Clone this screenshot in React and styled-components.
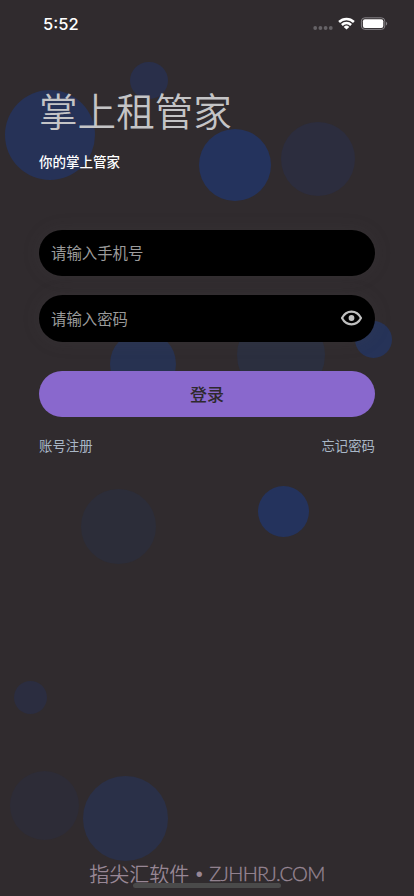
import React from "react";
import styled, { createGlobalStyle } from "styled-components";

const Global = createGlobalStyle`
  * { box-sizing: border-box; }
  body { margin: 0; background: #302b2e; }
  button, input { font: inherit; border: 0; padding: 0; background: none; }
`;

const Screen = styled.main`
  position: relative;
  display: flex;
  flex-direction: column;
  width: 414px;
  height: 896px;
  overflow: hidden;
  isolation: isolate;
  background: #302b2e;
  font-family: "Noto Sans CJK SC", sans-serif;
`;

const Bubble = styled.i`
  position: absolute;
  z-index: -1;
  left: ${(p) => p.$x - p.$r}px;
  top: ${(p) => p.$y - p.$r}px;
  width: ${(p) => p.$r * 2}px;
  height: ${(p) => p.$r * 2}px;
  border-radius: 50%;
  background: ${(p) => p.$color};
`;

const StatusBar = styled.header`
  display: flex;
  justify-content: space-between;
  align-items: center;
  height: 48px;
  padding: 0 26px 0 43px;
`;

const Clock = styled.time`
  color: #fff;
  font: 500 16.5px/20px Inter, sans-serif;
`;

const StatusIcons = styled.svg`
  display: block;
  width: 75px;
  height: 20px;
`;

const Content = styled.section`
  display: flex;
  flex-direction: column;
  padding: 32px 39px 0;
`;

const Title = styled.h1`
  margin: 0;
  color: #c4c4c6;
  font-size: 38.6px;
  line-height: 58px;
  font-weight: 350;
`;

const Subtitle = styled.p`
  margin: 13px 0 0;
  color: #fff;
  font-size: 13.5px;
  line-height: 20px;
  font-weight: 500;
`;

const Form = styled.form`
  display: flex;
  flex-direction: column;
  margin-top: 58.5px;
`;

const Field = styled.label`
  display: flex;
  align-items: center;
  height: 46.5px;
  margin-bottom: 19px;
  padding: 0 12px;
  border-radius: 24px;
  background: #000;
  box-shadow: 0 0 18px rgba(80, 80, 80, 0.16);
`;

const Input = styled.input`
  flex: 1;
  min-width: 0;
  height: 31px;
  padding-bottom: 1px;
  outline: 0;
  color: #ccc;
  font-size: 15.4px;
  &::placeholder { color: #9b9b9b; opacity: 1; }
`;

const EyeIcon = styled.svg`
  display: block;
  width: 23px;
  height: 18px;
`;

const Submit = styled.button`
  height: 46px;
  margin-top: 10px;
  border-radius: 23px;
  background: #8968cd;
  color: #2e292d;
  font-size: 17px;
  line-height: 45px;
  font-weight: 500;
`;

const Links = styled.nav`
  display: flex;
  justify-content: space-between;
  margin-top: 18px;
`;

const Link = styled.a`
  color: #a9b7c6;
  font-size: 13.4px;
  line-height: 20px;
`;

const Footer = styled.footer`
  display: flex;
  flex-direction: column;
  align-items: center;
  margin-top: auto;
  padding-bottom: 7px;
`;

const Credit = styled.div`
  display: flex;
  align-items: center;
  color: #988795;
  font-size: 20px;
  line-height: 30px;
  font-weight: 350;
  white-space: nowrap;
`;

const CreditDot = styled.span`
  width: 20px;
  text-align: center;
  font-family: "Liberation Sans", sans-serif;
  font-weight: 400;
`;

const CreditSite = styled.span`
  width: 115.5px;
  padding-bottom: 1px;
  font-family: Lato, sans-serif;
  font-size: 20px;
  font-weight: 300;
  letter-spacing: -0.65px;
  -webkit-text-stroke: 0.3px #988795;
`;

const HomeIndicator = styled.div`
  position: absolute;
  bottom: 8px;
  left: 133px;
  width: 148px;
  height: 5px;
  border-radius: 3px;
  background: #4a4a4a;
`;

const bubbles = [
  [50, 134.5, 45, "#263257"],
  [149, 80.5, 18.8, "#292f4a"],
  [235, 164.5, 36, "#24335d"],
  [318, 159, 37, "#2c2d3e"],
  [143, 364, 33, "#273251"],
  [281, 355, 44, "#2b2f3f"],
  [373.8, 339.8, 18.5, "#263358"],
  [118.7, 526.5, 37.3, "#2c2d39"],
  [283.3, 511.5, 25.8, "#24335d"],
  [30.7, 697.3, 16.8, "#2b2d40"],
  [44, 805, 34.5, "#2d2c37"],
  [125.3, 818.7, 42.3, "#2a3048"],
];

export default function App() {
  return (
    <Screen>
      <Global />
      {bubbles.map(([x, y, r, color]) => (
        <Bubble key={`${x}-${y}`} $x={x} $y={y} $r={r} $color={color} />
      ))}
      <StatusBar>
        <Clock>5:52</Clock>
        <StatusIcons viewBox="0 0 75 20">
          <g fill="#656266">
            <circle cx="2.2" cy="14" r="1.9" />
            <circle cx="7.4" cy="14" r="1.9" />
            <circle cx="12.6" cy="14" r="1.9" />
            <circle cx="17.8" cy="14" r="1.9" />
          </g>
          <g fill="none" stroke="#fff" strokeWidth="2.5">
            <path d="M26.1 8a10.5 10.5 0 0 1 14.8 0" />
            <path d="M28.9 11a6.5 6.5 0 0 1 9.2 0" />
          </g>
          <path d="M33.5 15.6 30.7 12.9a4 4 0 0 1 5.6 0Z" fill="#fff" />
          <rect x="48.4" y="3.8" width="23.4" height="11.6" rx="3.4" fill="none" stroke="#858286" />
          <rect x="49.9" y="5.2" width="20.4" height="8.8" rx="2" fill="#fff" />
          <path d="M73 7.8c1.6.5 1.6 3.2 0 3.7z" fill="#858286" />
        </StatusIcons>
      </StatusBar>
      <Content>
        <Title>掌上租管家</Title>
        <Subtitle>你的掌上管家</Subtitle>
        <Form>
          <Field>
            <Input type="tel" placeholder="请输入手机号" />
          </Field>
          <Field>
            <Input type="password" placeholder="请输入密码" />
            <EyeIcon viewBox="0 0 23 18" fill="none">
              <path d="M2 9C4.2 4.8 7.6 2.7 11.5 2.7S18.8 4.8 21 9c-2.2 4.2-5.6 6.3-9.5 6.3S4.2 13.2 2 9Z" stroke="#c0c0c0" strokeWidth="2.2" strokeLinejoin="round" />
              <circle cx="11.5" cy="9" r="2.9" fill="#c0c0c0" />
            </EyeIcon>
          </Field>
          <Submit type="button">登录</Submit>
        </Form>
        <Links>
          <Link>账号注册</Link>
          <Link>忘记密码</Link>
        </Links>
      </Content>
      <Footer>
        <Credit>
          指尖汇软件<CreditDot>•</CreditDot>
          <CreditSite>ZJHHRJ.COM</CreditSite>
        </Credit>
        <HomeIndicator />
      </Footer>
    </Screen>
  );
}
